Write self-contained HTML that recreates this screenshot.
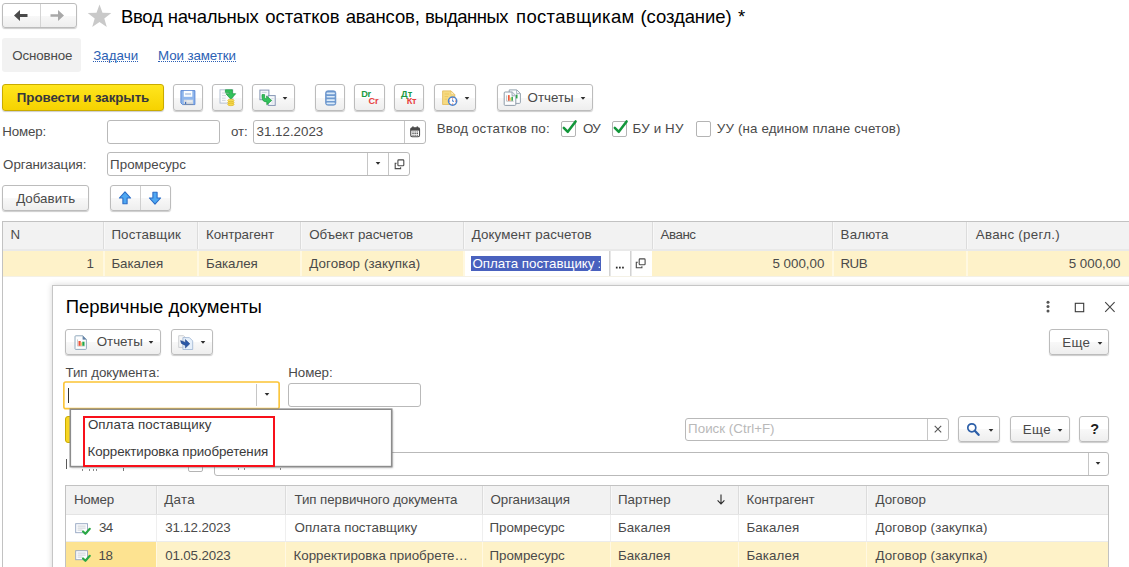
<!DOCTYPE html>
<html><head><meta charset="utf-8">
<style>
*{box-sizing:border-box;margin:0;padding:0}
html,body{width:1129px;height:567px;overflow:hidden;background:#fff}
body{font-family:"Liberation Sans",sans-serif;font-size:13.33px;color:#4a4a4a;position:relative}
.a{position:absolute;white-space:nowrap}
.t{position:absolute;white-space:nowrap;line-height:16px;height:16px}
.btn{position:absolute;border:1px solid #bcbcbc;border-radius:3px;background:linear-gradient(#ffffff 0%,#ffffff 50%,#f8f8f8 52%,#eeeeee 100%);box-shadow:0 1px 1px rgba(0,0,0,.2)}
.inp{position:absolute;border:1px solid #b9b9b9;border-radius:3px;background:#fff}
.cb{position:absolute;border:1px solid #b4b4b4;border-radius:2px;background:#fff}
</style></head><body>

<div class="btn" style="left:2px;top:3px;width:74.8px;height:25px;"></div>
<div class="a" style="left:39.5px;top:4px;width:1px;height:23px;background:#d4d4d4;"></div>
<svg class="a" style="left:13px;top:9px" width="16" height="13" viewBox="0 0 16 13"><path d="M1 6.5 L7 1 V5 H14.5 V8 H7 V12 Z" fill="#4a4a4a"/></svg>
<svg class="a" style="left:49px;top:9px" width="16" height="13" viewBox="0 0 16 13"><path d="M15 6.5 L9 1 V5.2 H1.5 V7.8 H9 V12 Z" fill="#a8a8a8"/></svg>
<svg class="a" style="left:87px;top:3.5px" width="25" height="24" viewBox="0 0 25 24"><path d="M12.5 0.5 L15.5 8.8 L24.3 9 L17.3 14.4 L19.8 22.9 L12.5 17.9 L5.2 22.9 L7.7 14.4 L0.7 9 L9.5 8.8 Z" fill="#c9c9c9"/></svg>
<div class="t" style="left:121.00px;top:8.69px;font-size:18.5px;color:#000;letter-spacing:-0.314px;line-height:22px;height:22px;margin-top:-3px;">Ввод</div>
<div class="t" style="left:167.80px;top:8.69px;font-size:18.5px;color:#000;letter-spacing:-0.297px;line-height:22px;height:22px;margin-top:-3px;">начальных</div>
<div class="t" style="left:265.30px;top:8.69px;font-size:18.5px;color:#000;letter-spacing:-0.036px;line-height:22px;height:22px;margin-top:-3px;">остатков</div>
<div class="t" style="left:345.70px;top:8.69px;font-size:18.5px;color:#000;letter-spacing:-0.127px;line-height:22px;height:22px;margin-top:-3px;">авансов,</div>
<div class="t" style="left:425.10px;top:8.69px;font-size:18.5px;color:#000;letter-spacing:-0.548px;line-height:22px;height:22px;margin-top:-3px;">выданных</div>
<div class="t" style="left:516.10px;top:8.69px;font-size:18.5px;color:#000;letter-spacing:0.312px;line-height:22px;height:22px;margin-top:-3px;">поставщикам</div>
<div class="t" style="left:640.40px;top:8.69px;font-size:18.5px;color:#000;letter-spacing:-0.066px;line-height:22px;height:22px;margin-top:-3px;">(создание)</div>
<div class="t" style="left:737.90px;top:8.69px;font-size:18.5px;color:#000;letter-spacing:-0.300px;line-height:22px;height:22px;margin-top:-3px;">*</div>
<div class="a" style="left:2px;top:38px;width:79px;height:34px;background:#f2f2f2;border-radius:3px;"></div>
<div class="t" style="left:12.30px;top:47.98px;font-size:13.33px;letter-spacing:-0.122px;">Основное</div>
<div class="t" style="left:93.30px;top:47.98px;font-size:13.33px;color:#2b5fb4;letter-spacing:0.019px;border-bottom:1px dotted #2b5fb4;height:14.5px;">Задачи</div>
<div class="t" style="left:158.00px;top:47.98px;font-size:13.33px;color:#2b5fb4;letter-spacing:-0.090px;border-bottom:1px dotted #2b5fb4;height:14.5px;">Мои заметки</div>
<div class="btn" style="left:2px;top:84px;width:162px;height:26.5px;background:linear-gradient(#ffe61e,#f6d200);border-color:#c9ab00;"></div>
<div class="t" style="left:16.80px;top:90.28px;font-size:13.33px;color:#36363c;font-weight:bold;letter-spacing:-0.067px;">Провести и закрыть</div>
<div class="btn" style="left:173px;top:84px;width:30px;height:26.5px;"></div>
<div class="btn" style="left:212px;top:84px;width:30.5px;height:26.5px;"></div>
<div class="btn" style="left:252px;top:84px;width:42.5px;height:26.5px;"></div>
<div class="btn" style="left:315px;top:84px;width:30px;height:26.5px;"></div>
<div class="btn" style="left:354.3px;top:84px;width:30.3px;height:26.5px;"></div>
<div class="btn" style="left:394.2px;top:84px;width:30.3px;height:26.5px;"></div>
<div class="btn" style="left:433.5px;top:84px;width:42.5px;height:26.5px;"></div>
<div class="btn" style="left:496.5px;top:84px;width:96px;height:26.5px;"></div>
<div class="t" style="left:527.60px;top:90.28px;font-size:13.33px;letter-spacing:0.002px;">Отчеты</div>
<svg class="a" style="left:281.9px;top:96.8px" width="6" height="3" viewBox="0 0 6 3"><path d="M0.7 0 H5.3 L3.25 2.5 H2.75 Z" fill="#2e2e2e"/></svg>
<svg class="a" style="left:463.5px;top:96.8px" width="6" height="3" viewBox="0 0 6 3"><path d="M0.7 0 H5.3 L3.25 2.5 H2.75 Z" fill="#2e2e2e"/></svg>
<svg class="a" style="left:579.7px;top:96.8px" width="6" height="3" viewBox="0 0 6 3"><path d="M0.7 0 H5.3 L3.25 2.5 H2.75 Z" fill="#2e2e2e"/></svg>
<svg class="a" style="left:180px;top:90px" width="16" height="16" viewBox="0 0 16 16"><path d="M0.9 0.6 H14.9 V14.6 H2.6 L0.9 12.9 Z" fill="#8fb6ec" stroke="#5583d2" stroke-width="0.9"/>
<rect x="3.8" y="0.9" width="8.5" height="5.9" fill="#fbfdff"/><rect x="5.1" y="3" width="5.9" height="2.1" fill="#c3d3ea"/>
<rect x="3.8" y="9.7" width="9.2" height="4.7" fill="#d9dde2"/><rect x="5" y="11.9" width="1.2" height="2.2" fill="#3f6fc0"/><rect x="3.8" y="13.9" width="9.2" height="0.8" fill="#6a7f9e"/><rect x="6.8" y="10.6" width="5.4" height="1" fill="#f1f3f6"/></svg>
<svg class="a" style="left:218.5px;top:89px" width="18" height="18" viewBox="0 0 18 18"><rect x="1" y="0.8" width="12.8" height="13.3" fill="#f9fafc" stroke="#aebace" stroke-width="0.9"/>
<path d="M3 4 H6.4 M3 6.6 H7 M3 9.2 H6.6 M3 11.4 H6.6" stroke="#c5ccd8" stroke-width="0.8"/>
<path d="M6.4 0.8 H13.4 V4.7 H16.7 L11.8 10.2 L6.9 4.7 H10.3 V3.4 H6.4 Z" fill="#33c25c" stroke="#1a9a3e" stroke-width="0.7" stroke-linejoin="round"/>
<ellipse cx="11.9" cy="11.5" rx="3.2" ry="1.3" fill="#f8e05a" stroke="#d9b022" stroke-width="0.6"/>
<ellipse cx="11.9" cy="13.5" rx="3.2" ry="1.3" fill="#f6d94a" stroke="#d9b022" stroke-width="0.6"/>
<ellipse cx="11.9" cy="15.4" rx="3.2" ry="1.3" fill="#f6d94a" stroke="#d9b022" stroke-width="0.6"/></svg>
<svg class="a" style="left:258.5px;top:89px" width="18" height="18" viewBox="0 0 18 18"><rect x="0.9" y="1.1" width="9" height="9.6" fill="#f6f8fb" stroke="#8595b4" stroke-width="1"/>
<path d="M2.8 3.4 H7.6" stroke="#c2cad8" stroke-width="0.8"/>
<rect x="9.2" y="6.6" width="7" height="9.8" fill="#f6f8fb" stroke="#8595b4" stroke-width="1"/>
<path d="M12.4 9.6 H14.6 M12.4 12 H14.6 M12.4 14 H14.6" stroke="#c9d2e0" stroke-width="0.8"/>
<path d="M3 5.6 H5.6 V8.2 Q5.6 9.9 7.6 9.9 V7 L12.7 11.4 L7.8 15.8 V12.9 Q3 12.9 3 8.2 Z" fill="#33c25c" stroke="#1a9a3e" stroke-width="0.7" stroke-linejoin="round"/></svg>
<svg class="a" style="left:325px;top:89.5px" width="12" height="16" viewBox="0 0 12 16"><rect x="0.5" y="0.7" width="10.4" height="14.6" rx="2.4" fill="#6f9ad0" stroke="#5785c2" stroke-width="0.6"/>
<rect x="1.5" y="2.4" width="8.4" height="1.8" rx="0.8" fill="#dcebf9"/><rect x="1.5" y="5.9" width="8.4" height="1.7" rx="0.8" fill="#dcebf9"/>
<rect x="1.5" y="9.3" width="8.4" height="1.7" rx="0.8" fill="#dcebf9"/><rect x="1.5" y="12.6" width="8.4" height="1.6" rx="0.8" fill="#dcebf9"/></svg>
<div class="a" style="left:361.20px;top:89.85px;font-size:9.2px;font-weight:bold;color:#1b9a43;line-height:9px;letter-spacing:-0.35px">Dr</div>
<div class="a" style="left:368.60px;top:97.25px;font-size:9.2px;font-weight:bold;color:#e8423f;line-height:9px;letter-spacing:-0.35px">Cr</div>
<div class="a" style="left:401.00px;top:89.85px;font-size:9.2px;font-weight:bold;color:#1b9a43;line-height:9px;letter-spacing:0.15px">Дт</div>
<div class="a" style="left:406.70px;top:97.25px;font-size:9.2px;font-weight:bold;color:#e8423f;line-height:9px;letter-spacing:-0.31px">Кт</div>
<svg class="a" style="left:440.5px;top:89.5px" width="18" height="18" viewBox="0 0 18 18"><path d="M1.6 0.9 H10 L13.8 4.7 V14.5 H1.6 Z" fill="#f6da80" stroke="#e4bd62" stroke-width="0.9" stroke-linejoin="round"/>
<path d="M10 0.9 V4.7 H13.8 Z" fill="#fdf0c4" stroke="#e4bd62" stroke-width="0.6"/>
<path d="M3.6 4 H8 M3.6 6.6 H7 M3.6 9.2 H6" stroke="#eec85e" stroke-width="1"/>
<circle cx="11.6" cy="11.1" r="4.1" fill="#fdfdff" stroke="#4a84cf" stroke-width="1.5"/>
<path d="M11.6 7.6 v1 M11.6 13.6 v1 M8.1 11.1 h1 M14.1 11.1 h1" stroke="#e0604a" stroke-width="1"/>
<path d="M11.6 9.4 V11.3 H13" stroke="#4a84cf" stroke-width="1" fill="none"/></svg>
<svg class="a" style="left:502.5px;top:89px" width="19" height="18" viewBox="0 0 19 18"><path d="M6.2 0.9 H13.8 L17.4 4.5 V13.4 Q17.4 14.4 16.4 14.4 H6.2 Z" fill="#fcfdfe" stroke="#95a3af" stroke-width="1" stroke-linejoin="round"/>
<path d="M13.6 1 V4.6 H17.2" fill="none" stroke="#95a3af" stroke-width="0.8"/>
<path d="M2.2 3 H9.2 L12.8 6.6 V15.4 Q12.8 16.4 11.8 16.4 H2.2 Q1.2 16.4 1.2 15.4 V4 Q1.2 3 2.2 3 Z" fill="#fcfdfe" stroke="#8d9ba8" stroke-width="1" stroke-linejoin="round"/>
<path d="M9 3.2 V6.8 H12.6" fill="#e8edf2" stroke="#8d9ba8" stroke-width="0.8"/>
<rect x="13" y="5.6" width="1.5" height="3.8" fill="#2ba446"/>
<rect x="5" y="6.1" width="1.7" height="5.7" fill="#ee5a3a"/><rect x="6.9" y="8.6" width="1.2" height="3.2" fill="#f3d46a"/><rect x="8.4" y="7.8" width="1.5" height="4" fill="#2ba446"/>
<path d="M3.6 6.4 V12.2 H10.6" fill="none" stroke="#9a9a9a" stroke-width="0.6"/></svg>
<div class="t" style="left:2.20px;top:124.38px;font-size:13.33px;letter-spacing:-0.125px;">Номер:</div>
<div class="inp" style="left:107px;top:120px;width:112.5px;height:23.5px;"></div>
<div class="t" style="left:231.00px;top:124.38px;font-size:13.33px;letter-spacing:-0.162px;">от:</div>
<div class="inp" style="left:253px;top:120px;width:173px;height:23.5px;"></div>
<div class="a" style="left:404px;top:121px;width:1px;height:21.5px;background:#c6c6c6;"></div>
<div class="t" style="left:256.60px;top:124.38px;font-size:13.33px;letter-spacing:-0.010px;">31.12.2023</div>
<svg class="a" style="left:409.7px;top:125.6px" width="11" height="12" viewBox="0 0 12 13"><rect x="0.8" y="2" width="9.6" height="9.6" rx="1.6" fill="#fff" stroke="#4a4a4a" stroke-width="1.2"/>
<rect x="0.8" y="2" width="9.6" height="3" fill="#4a4a4a"/><rect x="2.4" y="0.4" width="1.6" height="2.6" fill="#4a4a4a"/><rect x="7.2" y="0.4" width="1.6" height="2.6" fill="#4a4a4a"/>
<path d="M2.6 6.4 h1.4 M4.9 6.4 h1.4 M7.2 6.4 h1.4 M2.6 8.2 h1.4 M4.9 8.2 h1.4 M7.2 8.2 h1.4 M2.6 10 h1.4 M4.9 10 h1.4 M7.2 10 h1.4" stroke="#4a4a4a" stroke-width="1.1"/></svg>
<div class="t" style="left:436.80px;top:121.28px;font-size:13.33px;letter-spacing:0.164px;">Ввод остатков по:</div>
<div class="cb" style="left:561px;top:121px;width:15px;height:15.6px;"></div>
<svg class="a" style="left:562px;top:118.5px" width="16" height="16" viewBox="0 0 16 16"><path d="M1.8 8.8 L5.8 12.8 L13.6 2.4" fill="none" stroke="#12963a" stroke-width="2.5" stroke-linecap="round" stroke-linejoin="round"/></svg>
<div class="t" style="left:582.90px;top:121.28px;font-size:13.33px;letter-spacing:-0.600px;">ОУ</div>
<div class="cb" style="left:612px;top:121px;width:15px;height:15.6px;"></div>
<svg class="a" style="left:613px;top:118.5px" width="16" height="16" viewBox="0 0 16 16"><path d="M1.8 8.8 L5.8 12.8 L13.6 2.4" fill="none" stroke="#12963a" stroke-width="2.5" stroke-linecap="round" stroke-linejoin="round"/></svg>
<div class="t" style="left:632.60px;top:121.28px;font-size:13.33px;letter-spacing:0.153px;">БУ и НУ</div>
<div class="cb" style="left:695.5px;top:121px;width:15px;height:15.6px;"></div>
<div class="t" style="left:716.80px;top:121.28px;font-size:13.33px;letter-spacing:0.150px;">УУ (на едином плане счетов)</div>
<div class="t" style="left:3.10px;top:156.98px;font-size:13.33px;letter-spacing:-0.071px;">Организация:</div>
<div class="inp" style="left:107px;top:152.3px;width:303px;height:23.5px;"></div>
<div class="a" style="left:367px;top:153.3px;width:1px;height:21.5px;background:#c6c6c6;"></div>
<div class="a" style="left:388px;top:153.3px;width:1px;height:21.5px;background:#c6c6c6;"></div>
<div class="t" style="left:110.10px;top:156.98px;font-size:13.33px;letter-spacing:0.024px;">Промресурс</div>
<svg class="a" style="left:374.5px;top:162px" width="6" height="3" viewBox="0 0 6 3"><path d="M0.7 0 H5.3 L3.25 2.5 H2.75 Z" fill="#2e2e2e"/></svg>
<svg class="a" style="left:393.5px;top:158.5px" width="12" height="12" viewBox="0 0 12 12"><rect x="3.9" y="0.9" width="5.9" height="5.9" rx="0.8" fill="none" stroke="#4a4a4a" stroke-width="1.1"/><path d="M2.6 4.2 H1.2 V9.6 H6.6 V8.2" fill="none" stroke="#4a4a4a" stroke-width="1.1"/></svg>
<div class="btn" style="left:2px;top:185px;width:86.5px;height:26px;"></div>
<div class="t" style="left:16.20px;top:191.08px;font-size:13.33px;letter-spacing:0.006px;">Добавить</div>
<div class="btn" style="left:110px;top:185px;width:60.5px;height:26px;"></div>
<div class="a" style="left:140.3px;top:186px;width:1px;height:24px;background:#cfcfcf;"></div>
<svg class="a" style="left:118px;top:191.3px" width="14" height="14" viewBox="0 0 14 14"><path d="M7 0.8 L12.6 7 H9.1 V12.8 H4.9 V7 H1.4 Z" fill="#4fa8f2" stroke="#2b6cc6" stroke-width="1.1" stroke-linejoin="round"/></svg>
<svg class="a" style="left:147.8px;top:191.3px" width="14" height="14" viewBox="0 0 14 14"><path d="M7 13.2 L12.6 7 H9.1 V1.2 H4.9 V7 H1.4 Z" fill="#4fa8f2" stroke="#2b6cc6" stroke-width="1.1" stroke-linejoin="round"/></svg>
<div class="a" style="left:2px;top:221px;width:1127px;height:1px;background:#c2c2c2;"></div>
<div class="a" style="left:2px;top:221px;width:1px;height:346px;background:#c2c2c2;"></div>
<div class="a" style="left:3px;top:222px;width:1126px;height:27px;background:#f2f2f2;"></div>
<div class="a" style="left:3px;top:251px;width:1126px;height:25px;background:#fef2c9;"></div>
<div class="a" style="left:3px;top:276px;width:1126px;height:1px;background:#f4f1e6;"></div>
<div class="a" style="left:103px;top:222px;width:1px;height:27px;background:#dcdcdc;"></div>
<div class="a" style="left:104px;top:222px;width:1px;height:27px;background:#f8f8f8;"></div>
<div class="a" style="left:103px;top:251px;width:2px;height:25px;background:#fff8e0;"></div>
<div class="a" style="left:197px;top:222px;width:1px;height:27px;background:#dcdcdc;"></div>
<div class="a" style="left:198px;top:222px;width:1px;height:27px;background:#f8f8f8;"></div>
<div class="a" style="left:197px;top:251px;width:2px;height:25px;background:#fff8e0;"></div>
<div class="a" style="left:300px;top:222px;width:1px;height:27px;background:#dcdcdc;"></div>
<div class="a" style="left:301px;top:222px;width:1px;height:27px;background:#f8f8f8;"></div>
<div class="a" style="left:300px;top:251px;width:2px;height:25px;background:#fff8e0;"></div>
<div class="a" style="left:463px;top:222px;width:1px;height:27px;background:#dcdcdc;"></div>
<div class="a" style="left:464px;top:222px;width:1px;height:27px;background:#f8f8f8;"></div>
<div class="a" style="left:463px;top:251px;width:2px;height:25px;background:#fff8e0;"></div>
<div class="a" style="left:652px;top:222px;width:1px;height:27px;background:#dcdcdc;"></div>
<div class="a" style="left:653px;top:222px;width:1px;height:27px;background:#f8f8f8;"></div>
<div class="a" style="left:832px;top:222px;width:1px;height:27px;background:#dcdcdc;"></div>
<div class="a" style="left:833px;top:222px;width:1px;height:27px;background:#f8f8f8;"></div>
<div class="a" style="left:832px;top:251px;width:2px;height:25px;background:#fff8e0;"></div>
<div class="a" style="left:966px;top:222px;width:1px;height:27px;background:#dcdcdc;"></div>
<div class="a" style="left:967px;top:222px;width:1px;height:27px;background:#f8f8f8;"></div>
<div class="a" style="left:966px;top:251px;width:2px;height:25px;background:#fff8e0;"></div>
<div class="a" style="left:3px;top:249px;width:1126px;height:2px;background:#e9e9e9;"></div>
<div class="t" style="left:10.50px;top:226.98px;font-size:13.33px;letter-spacing:0.600px;">N</div>
<div class="t" style="left:111.40px;top:226.98px;font-size:13.33px;letter-spacing:0.136px;">Поставщик</div>
<div class="t" style="left:206.00px;top:226.98px;font-size:13.33px;letter-spacing:-0.090px;">Контрагент</div>
<div class="t" style="left:309.30px;top:226.98px;font-size:13.33px;letter-spacing:-0.065px;">Объект расчетов</div>
<div class="t" style="left:471.70px;top:226.98px;font-size:13.33px;letter-spacing:0.091px;">Документ расчетов</div>
<div class="t" style="left:660.50px;top:226.98px;font-size:13.33px;letter-spacing:-0.448px;">Аванс</div>
<div class="t" style="left:840.60px;top:226.98px;font-size:13.33px;letter-spacing:0.153px;">Валюта</div>
<div class="t" style="left:975.80px;top:226.98px;font-size:13.33px;letter-spacing:0.269px;">Аванс (регл.)</div>
<div class="t" style="left:86.60px;top:255.98px;font-size:13.33px;">1</div>
<div class="t" style="left:111.40px;top:255.98px;font-size:13.33px;letter-spacing:-0.064px;">Бакалея</div>
<div class="t" style="left:206.00px;top:255.98px;font-size:13.33px;letter-spacing:-0.064px;">Бакалея</div>
<div class="t" style="left:309.30px;top:255.98px;font-size:13.33px;letter-spacing:0.069px;">Договор (закупка)</div>
<div class="a" style="left:465px;top:251px;width:187px;height:25px;background:#fff;"></div>
<div class="a" style="left:471px;top:256px;width:130px;height:15px;background:#4961be;"></div>
<div class="t" style="left:472.40px;top:255.98px;font-size:13.33px;color:#fff;letter-spacing:-0.018px;">Оплата поставщику</div>
<div class="t" style="left:597.50px;top:255.98px;font-size:13.33px;color:#fff;width:2.3px;overflow:hidden;">:</div>
<svg class="a" style="left:608px;top:251px" width="4" height="25" viewBox="0 0 4 25"><rect x="1.1" y="0" width="1.4" height="25" fill="#cfcfcf"/></svg>
<svg class="a" style="left:629px;top:251px" width="4" height="25" viewBox="0 0 4 25"><rect x="1.1" y="0" width="1.4" height="25" fill="#cfcfcf"/></svg>
<svg class="a" style="left:615px;top:265.5px" width="10" height="3" viewBox="0 0 10 3"><rect x="0.9" y="0.7" width="1.7" height="1.8" fill="#2a2a2a"/><rect x="4" y="0.7" width="1.7" height="1.8" fill="#2a2a2a"/><rect x="7.1" y="0.7" width="1.7" height="1.8" fill="#2a2a2a"/></svg>
<svg class="a" style="left:634.8px;top:258px" width="12" height="12" viewBox="0 0 12 12"><rect x="4.2" y="0.9" width="5.9" height="5.9" rx="0.8" fill="none" stroke="#4a4a4a" stroke-width="1.1"/><path d="M2.8 4.2 H1.3 V9.8 H6.9 V8.2" fill="none" stroke="#4a4a4a" stroke-width="1.1"/></svg>
<div class="t" style="left:772.50px;top:255.98px;font-size:13.33px;letter-spacing:-0.010px;">5 000,00</div>
<div class="t" style="left:840.60px;top:255.98px;font-size:13.33px;letter-spacing:-0.600px;">RUB</div>
<div class="t" style="left:1068.80px;top:255.98px;font-size:13.33px;letter-spacing:-0.024px;">5 000,00</div>
<div class="a" style="left:52px;top:285px;width:1100px;height:300px;background:#fff;border:1px solid #c6c6c6;box-shadow:0 0 6px rgba(0,0,0,.17)"></div>
<div class="t" style="left:65.70px;top:299.29px;font-size:18.5px;color:#000;letter-spacing:0.009px;line-height:22px;height:22px;margin-top:-3px;">Первичные документы</div>
<svg class="a" style="left:1045px;top:300px" width="6" height="13" viewBox="0 0 6 13"><circle cx="3" cy="2.3" r="1.5" fill="#555"/><circle cx="3" cy="6.6" r="1.5" fill="#555"/><circle cx="3" cy="10.9" r="1.5" fill="#555"/></svg>
<svg class="a" style="left:1073.5px;top:301.5px" width="11" height="11" viewBox="0 0 11 11"><rect x="1.3" y="1.3" width="8.4" height="8.4" fill="none" stroke="#3a3a3a" stroke-width="1.1"/></svg>
<svg class="a" style="left:1103.5px;top:300.5px" width="12" height="12" viewBox="0 0 12 12"><path d="M1.2 1.2 L10.6 10.8 M10.6 1.2 L1.2 10.8" stroke="#444" stroke-width="1.1"/></svg>
<div class="btn" style="left:65px;top:329px;width:96px;height:26px;"></div>
<div class="t" style="left:96.70px;top:334.48px;font-size:13.33px;letter-spacing:0.002px;">Отчеты</div>
<svg class="a" style="left:148.3px;top:341.3px" width="6" height="3" viewBox="0 0 6 3"><path d="M0.7 0 H5.3 L3.25 2.5 H2.75 Z" fill="#2e2e2e"/></svg>
<svg class="a" style="left:73.5px;top:335px" width="14" height="16" viewBox="0 0 14 16"><path d="M1.8 0.8 H8.8 L12.4 4.4 V13.6 Q12.4 14.4 11.6 14.4 H1.8 Q1 14.4 1 13.6 V1.6 Q1 0.8 1.8 0.8 Z" fill="#fcfdfe" stroke="#86a0b6" stroke-width="0.9"/><path d="M8.8 0.8 V4.4 H12.4 Z" fill="#5f7fa8" stroke="#86a0b6" stroke-width="0.5"/>
<path d="M3.5 4.4 V11.1 H10.8" fill="none" stroke="#b9b9b9" stroke-width="0.7"/>
<rect x="4.5" y="6" width="2.2" height="4.8" fill="#ee5238"/><rect x="6.7" y="7.4" width="1.2" height="3.4" fill="#f0c060"/><rect x="8.3" y="6.7" width="2.2" height="4.1" fill="#22a548"/></svg>
<div class="btn" style="left:170.7px;top:329px;width:42px;height:26px;"></div>
<svg class="a" style="left:200.3px;top:341.3px" width="6" height="3" viewBox="0 0 6 3"><path d="M0.7 0 H5.3 L3.25 2.5 H2.75 Z" fill="#2e2e2e"/></svg>
<svg class="a" style="left:178px;top:335px" width="16" height="16" viewBox="0 0 16 16"><path d="M0.7 0.7 H5.6 L7.8 2.9 V12.4 H0.7 Z" fill="#f6f6f7" stroke="#c4c6ca" stroke-width="0.8"/>
<path d="M4.9 2.6 H11.4 L14.7 5.9 V14.5 H4.9 Z" fill="#e6f0fb" stroke="#9cb2d0" stroke-width="0.8"/>
<path d="M2.6 5.6 L7.4 7.4 V4.6 L11.8 8.8 L7.4 13 V10.4 L3.4 8.4 Z" fill="#2a58a8" stroke="#1d3a7a" stroke-width="0.5" stroke-linejoin="round"/></svg>
<div class="btn" style="left:1049px;top:329.2px;width:60px;height:26px;"></div>
<div class="t" style="left:1062.30px;top:334.68px;font-size:13.33px;letter-spacing:0.297px;">Еще</div>
<svg class="a" style="left:1096.8px;top:342px" width="6" height="3" viewBox="0 0 6 3"><path d="M0.7 0 H5.3 L3.25 2.5 H2.75 Z" fill="#2e2e2e"/></svg>
<div class="t" style="left:65.40px;top:365.08px;font-size:13.33px;letter-spacing:-0.031px;">Тип документа:</div>
<div class="t" style="left:288.30px;top:365.08px;font-size:13.33px;letter-spacing:-0.085px;">Номер:</div>
<svg class="a" style="left:62px;top:380px" width="220" height="31" viewBox="0 0 220 31"><rect x="1.85" y="2.05" width="215.3" height="26.6" rx="2" fill="#fff" stroke="#fbc435" stroke-width="1.6"/></svg>
<div class="a" style="left:255.5px;top:384px;width:1px;height:22px;background:#c6c6c6;"></div>
<div class="a" style="left:68px;top:388px;width:1px;height:15px;background:#333;"></div>
<svg class="a" style="left:263.5px;top:393.3px" width="6" height="3" viewBox="0 0 6 3"><path d="M0.7 0 H5.3 L3.25 2.5 H2.75 Z" fill="#2e2e2e"/></svg>
<div class="inp" style="left:288px;top:383px;width:133px;height:24px;"></div>
<div class="a" style="left:65px;top:416px;width:10px;height:27px;background:#f7d523;border:1px solid #c9ab00;border-radius:3px;"></div>
<div class="inp" style="left:214px;top:452px;width:895px;height:24px;"></div>
<div class="a" style="left:1088px;top:453px;width:1px;height:22px;background:#c6c6c6;"></div>
<svg class="a" style="left:1095.2px;top:461.8px" width="6" height="3" viewBox="0 0 6 3"><path d="M0.7 0 H5.3 L3.25 2.5 H2.75 Z" fill="#2e2e2e"/></svg>
<div class="cb" style="left:187.5px;top:457px;width:15px;height:14.5px;"></div>
<div class="a" style="left:66px;top:459px;width:1.4px;height:10px;background:#5a5a5a;"></div>
<div class="a" style="left:82.4px;top:468.6px;width:1px;height:2px;background:#8a8a8a;"></div>
<div class="a" style="left:89.3px;top:468.6px;width:1px;height:2px;background:#8a8a8a;"></div>
<div class="a" style="left:92.5px;top:468.6px;width:1px;height:2px;background:#8a8a8a;"></div>
<div class="a" style="left:96.1px;top:468.6px;width:1px;height:2px;background:#8a8a8a;"></div>
<div class="a" style="left:122.6px;top:468px;width:1px;height:2.6px;background:#777;"></div>
<div class="a" style="left:237.5px;top:468.4px;width:1px;height:2px;background:#8a8a8a;"></div>
<div class="a" style="left:243.5px;top:468.4px;width:1px;height:2px;background:#8a8a8a;"></div>
<div class="a" style="left:280px;top:468.4px;width:1px;height:2px;background:#8a8a8a;"></div>
<div class="inp" style="left:685px;top:418px;width:264px;height:23px;"></div>
<div class="a" style="left:927px;top:419px;width:1px;height:21px;background:#c6c6c6;"></div>
<div class="t" style="left:688.10px;top:421.28px;font-size:13.33px;color:#b9b9b9;letter-spacing:0.021px;">Поиск (Ctrl+F)</div>
<svg class="a" style="left:933px;top:423.7px" width="10" height="10" viewBox="0 0 10 10"><path d="M1.7 1.8 L8.2 8.3 M8.2 1.8 L1.7 8.3" stroke="#555" stroke-width="1.1"/></svg>
<div class="btn" style="left:958px;top:416.3px;width:42px;height:26px;"></div>
<svg class="a" style="left:965.5px;top:421.8px" width="15" height="15" viewBox="0 0 15 15"><circle cx="5.8" cy="5.8" r="4" fill="none" stroke="#2d5fa8" stroke-width="1.7"/><path d="M8.8 8.8 L12.6 12.8" stroke="#2d5fa8" stroke-width="2.3" stroke-linecap="round"/></svg>
<svg class="a" style="left:987.8px;top:428.6px" width="6" height="3" viewBox="0 0 6 3"><path d="M0.7 0 H5.3 L3.25 2.5 H2.75 Z" fill="#2e2e2e"/></svg>
<div class="btn" style="left:1009.5px;top:416.3px;width:60px;height:26px;"></div>
<div class="t" style="left:1022.80px;top:421.68px;font-size:13.33px;letter-spacing:0.397px;">Еще</div>
<svg class="a" style="left:1057.3px;top:428.6px" width="6" height="3" viewBox="0 0 6 3"><path d="M0.7 0 H5.3 L3.25 2.5 H2.75 Z" fill="#2e2e2e"/></svg>
<div class="btn" style="left:1079px;top:416.3px;width:30px;height:26px;"></div>
<div class="t" style="left:1090.30px;top:421.48px;font-size:14.5px;color:#1e1e1e;font-weight:bold;letter-spacing:-0.500px;">?</div>
<div class="a" style="left:65px;top:485px;width:1044px;height:1px;background:#c2c2c2;"></div>
<div class="a" style="left:65px;top:485px;width:1px;height:82px;background:#c2c2c2;"></div>
<div class="a" style="left:1108px;top:485px;width:1px;height:82px;background:#c2c2c2;"></div>
<div class="a" style="left:66px;top:486px;width:1042px;height:28px;background:#f2f2f2;"></div>
<div class="a" style="left:66px;top:541px;width:1042px;height:1px;background:#ececec;"></div>
<div class="a" style="left:66px;top:542px;width:1042px;height:25px;background:#fef2c8;"></div>
<div class="a" style="left:66px;top:542px;width:90px;height:25px;background:#fde391;"></div>
<div class="a" style="left:156px;top:486px;width:1px;height:28px;background:#dcdcdc;"></div>
<div class="a" style="left:157px;top:486px;width:1px;height:28px;background:#f8f8f8;"></div>
<div class="a" style="left:156px;top:515px;width:1px;height:26px;background:#efefef;"></div>
<div class="a" style="left:156px;top:542px;width:1px;height:25px;background:#fff8e2;"></div>
<div class="a" style="left:285px;top:486px;width:1px;height:28px;background:#dcdcdc;"></div>
<div class="a" style="left:286px;top:486px;width:1px;height:28px;background:#f8f8f8;"></div>
<div class="a" style="left:285px;top:515px;width:1px;height:26px;background:#efefef;"></div>
<div class="a" style="left:285px;top:542px;width:1px;height:25px;background:#fff8e2;"></div>
<div class="a" style="left:482px;top:486px;width:1px;height:28px;background:#dcdcdc;"></div>
<div class="a" style="left:483px;top:486px;width:1px;height:28px;background:#f8f8f8;"></div>
<div class="a" style="left:482px;top:515px;width:1px;height:26px;background:#efefef;"></div>
<div class="a" style="left:482px;top:542px;width:1px;height:25px;background:#fff8e2;"></div>
<div class="a" style="left:610px;top:486px;width:1px;height:28px;background:#dcdcdc;"></div>
<div class="a" style="left:611px;top:486px;width:1px;height:28px;background:#f8f8f8;"></div>
<div class="a" style="left:610px;top:515px;width:1px;height:26px;background:#efefef;"></div>
<div class="a" style="left:610px;top:542px;width:1px;height:25px;background:#fff8e2;"></div>
<div class="a" style="left:738px;top:486px;width:1px;height:28px;background:#dcdcdc;"></div>
<div class="a" style="left:739px;top:486px;width:1px;height:28px;background:#f8f8f8;"></div>
<div class="a" style="left:738px;top:515px;width:1px;height:26px;background:#efefef;"></div>
<div class="a" style="left:738px;top:542px;width:1px;height:25px;background:#fff8e2;"></div>
<div class="a" style="left:866px;top:486px;width:1px;height:28px;background:#dcdcdc;"></div>
<div class="a" style="left:867px;top:486px;width:1px;height:28px;background:#f8f8f8;"></div>
<div class="a" style="left:866px;top:515px;width:1px;height:26px;background:#efefef;"></div>
<div class="a" style="left:866px;top:542px;width:1px;height:25px;background:#fff8e2;"></div>
<div class="a" style="left:66px;top:514px;width:1042px;height:1px;background:#e4e4e4;"></div>
<div class="t" style="left:73.90px;top:491.88px;font-size:13.33px;letter-spacing:-0.178px;">Номер</div>
<div class="t" style="left:164.30px;top:491.88px;font-size:13.33px;letter-spacing:0.300px;">Дата</div>
<div class="t" style="left:294.50px;top:491.88px;font-size:13.33px;letter-spacing:-0.081px;">Тип первичного документа</div>
<div class="t" style="left:490.60px;top:491.88px;font-size:13.33px;letter-spacing:-0.107px;">Организация</div>
<div class="t" style="left:617.90px;top:491.88px;font-size:13.33px;letter-spacing:0.069px;">Партнер</div>
<div class="t" style="left:746.50px;top:491.88px;font-size:13.33px;letter-spacing:-0.090px;">Контрагент</div>
<div class="t" style="left:875.50px;top:491.88px;font-size:13.33px;letter-spacing:0.015px;">Договор</div>
<svg class="a" style="left:715.5px;top:494px" width="10" height="12" viewBox="0 0 10 12"><path d="M5 0.6 V9.6 M1.6 6.4 L5 10 L8.4 6.4" fill="none" stroke="#2a2a2a" stroke-width="1.1"/></svg>
<svg class="a" style="left:74.5px;top:522.5px" width="17" height="13" viewBox="0 0 17 13"><rect x="0.7" y="0.7" width="11.8" height="9" fill="#fcfdfe" stroke="#93a4c0" stroke-width="0.9"/>
<path d="M2.6 3.1 H10.6 M2.6 5.1 H10.6 M2.6 7.1 H7.4" stroke="#b4bbc6" stroke-width="0.7"/>
<path d="M8 8.4 L10.4 10.8 L14.8 5.8" fill="none" stroke="#2aa845" stroke-width="2.1" stroke-linejoin="round" stroke-linecap="round"/></svg>
<svg class="a" style="left:74.5px;top:550px" width="17" height="13" viewBox="0 0 17 13"><rect x="0.7" y="0.7" width="11.8" height="9" fill="#fcfdfe" stroke="#93a4c0" stroke-width="0.9"/>
<path d="M2.6 3.1 H10.6 M2.6 5.1 H10.6 M2.6 7.1 H7.4" stroke="#b4bbc6" stroke-width="0.7"/>
<path d="M8 8.4 L10.4 10.8 L14.8 5.8" fill="none" stroke="#2aa845" stroke-width="2.1" stroke-linejoin="round" stroke-linecap="round"/></svg>
<div class="t" style="left:99.00px;top:520.38px;font-size:13.33px;letter-spacing:-0.600px;">34</div>
<div class="t" style="left:165.20px;top:520.38px;font-size:13.33px;letter-spacing:-0.133px;">31.12.2023</div>
<div class="t" style="left:294.50px;top:520.38px;font-size:13.33px;letter-spacing:0.020px;">Оплата поставщику</div>
<div class="t" style="left:489.60px;top:520.38px;font-size:13.33px;letter-spacing:-0.054px;">Промресурс</div>
<div class="t" style="left:617.90px;top:520.38px;font-size:13.33px;letter-spacing:0.086px;">Бакалея</div>
<div class="t" style="left:746.50px;top:520.38px;font-size:13.33px;letter-spacing:0.086px;">Бакалея</div>
<div class="t" style="left:875.50px;top:520.38px;font-size:13.33px;letter-spacing:0.132px;">Договор (закупка)</div>
<div class="t" style="left:98.60px;top:547.88px;font-size:13.33px;letter-spacing:-0.512px;">18</div>
<div class="t" style="left:165.20px;top:547.88px;font-size:13.33px;letter-spacing:-0.133px;">01.05.2023</div>
<div class="t" style="left:293.50px;top:547.88px;font-size:13.33px;letter-spacing:0.002px;">Корректировка приобрете…</div>
<div class="t" style="left:489.60px;top:547.88px;font-size:13.33px;letter-spacing:-0.054px;">Промресурс</div>
<div class="t" style="left:617.90px;top:547.88px;font-size:13.33px;letter-spacing:0.086px;">Бакалея</div>
<div class="t" style="left:746.50px;top:547.88px;font-size:13.33px;letter-spacing:0.086px;">Бакалея</div>
<div class="t" style="left:875.50px;top:547.88px;font-size:13.33px;letter-spacing:0.132px;">Договор (закупка)</div>
<div class="a" style="left:70px;top:409px;width:322px;height:58px;background:#fff;box-shadow:1px 1px 2px rgba(0,0,0,.22)"></div>
<svg class="a" style="left:68px;top:407px" width="326" height="62" viewBox="0 0 326 62"><rect x="2.3" y="2.2" width="321.4" height="57.4" fill="#fff" stroke="#8c8c8c" stroke-width="1.6"/></svg>
<div class="t" style="left:87.90px;top:416.58px;font-size:13.33px;color:#3a3a3a;letter-spacing:0.070px;">Оплата поставщику</div>
<div class="t" style="left:87.50px;top:444.08px;font-size:13.33px;color:#3a3a3a;letter-spacing:-0.091px;">Корректировка приобретения</div>
<div class="a" style="left:83.3px;top:416.2px;width:191.3px;height:50.7px;border:2.1px solid #f8101a"></div>
</body></html>
